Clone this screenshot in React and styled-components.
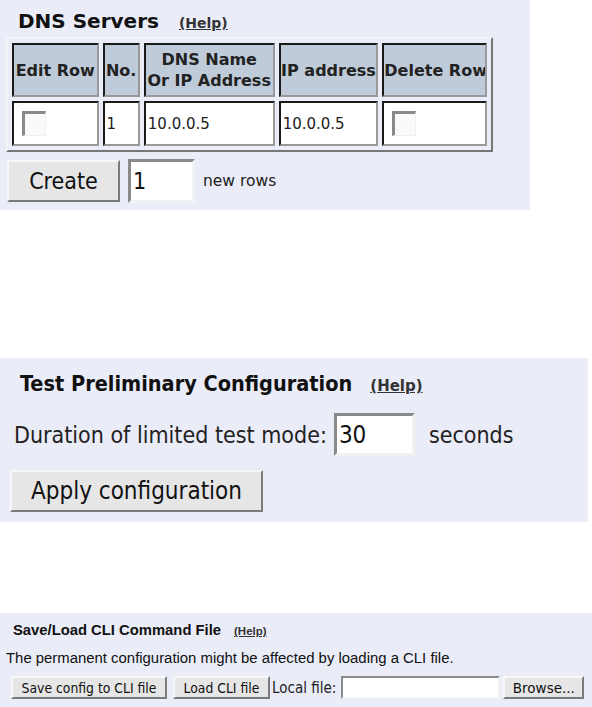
import React from 'react';
import styled, { createGlobalStyle } from 'styled-components';

const GlobalStyle = createGlobalStyle`
  html, body {
    margin: 0;
    padding: 0;
    background: #fff;
  }
`;

const Page = styled.div`
  display: flex;
  flex-direction: column;
  width: 592px;
`;

const Panel = styled.section`
  box-sizing: border-box;
  background: #eaecf8;
  width: ${(p) => p.$w}px;
  height: ${(p) => p.$h}px;
  margin-top: ${(p) => p.$top || 0}px;
  font-family: ${(p) => p.$font};
  color: #111;
  display: flex;
  flex-direction: column;
`;

const TitleRow = styled.div`
  display: flex;
  align-items: baseline;
  padding-left: ${(p) => p.$left}px;
  height: ${(p) => p.$h}px;
  padding-top: ${(p) => p.$top}px;
  box-sizing: border-box;
`;

const Title = styled.h2`
  margin: 0;
  font-size: ${(p) => p.$size}px;
  font-weight: bold;
  line-height: 1;
  color: #111;
`;

const Help = styled.a`
  margin-left: ${(p) => p.$gap}px;
  font-size: ${(p) => p.$size}px;
  font-weight: bold;
  color: #333;
  text-decoration: underline;
  cursor: pointer;
`;

const Grid = styled.table`
  margin-left: 6px;
  border: 2px solid;
  border-color: #f4f4f8 #777 #777 #f4f4f8;
  border-spacing: 4px 4px;
  table-layout: fixed;
  width: 487px;
  font-family: 'DejaVu Sans', sans-serif;
`;

const Head = styled.th`
  box-sizing: border-box;
  width: ${(p) => p.$w}px;
  height: 54px;
  padding: 0;
  background: #bfcbd9;
  border: 2px solid;
  border-color: #1a1a1a #999 #999 #1a1a1a;
  font-size: 16px;
  font-weight: bold;
  line-height: 21px;
  color: #222;
  text-align: center;
  white-space: nowrap;
  overflow: hidden;
`;

const Cell = styled.td`
  box-sizing: border-box;
  height: 45px;
  padding: 0 ${(p) => (p.$box ? 8 : 2)}px;
  background: #fff;
  border: 2px solid;
  border-color: #1a1a1a #999 #999 #1a1a1a;
  font-size: 15px;
  color: #222;
  vertical-align: middle;
`;

const Check = styled.span`
  display: block;
  box-sizing: border-box;
  width: 24px;
  height: 25px;
  background: #fafafa;
  border-top: 3px solid #8a8a8a;
  border-left: 3px solid #8a8a8a;
  border-right: 1px solid #f0f0f0;
  border-bottom: 1px solid #f0f0f0;
`;

const Row = styled.div`
  display: flex;
  align-items: center;
  padding-left: ${(p) => p.$left}px;
  margin-top: ${(p) => p.$top || 0}px;
  gap: ${(p) => p.$gap || 0}px;
`;

const Button = styled.button`
  box-sizing: border-box;
  height: ${(p) => p.$h}px;
  width: ${(p) => p.$w}px;
  padding: 0;
  background: #e6e6e6;
  border: ${(p) => p.$b}px solid;
  border-color: #f7f7f7 #7a7a7a #7a7a7a #f7f7f7;
  font-family: ${(p) => p.$font};
  font-size: ${(p) => p.$size}px;
  color: #111;
  text-align: center;
  white-space: nowrap;
`;

const Field = styled.input`
  box-sizing: border-box;
  height: ${(p) => p.$h}px;
  width: ${(p) => p.$w}px;
  padding: 0 0 0 2px;
  background: #fff;
  border: ${(p) => p.$b}px solid;
  border-color: #8a8a8a #f2f2f2 #f2f2f2 #8a8a8a;
  font-family: ${(p) => p.$font};
  font-size: ${(p) => p.$size}px;
  color: #111;
  outline: none;
`;

const Label = styled.span`
  font-size: ${(p) => p.$size}px;
  margin-left: ${(p) => p.$gap || 0}px;
  color: #222;
  white-space: nowrap;
`;

const Note = styled.p`
  margin: 0;
  padding-left: 6px;
  font-size: 14.9px;
  line-height: 17px;
  margin-top: 11px;
  color: #111;
  white-space: nowrap;
`;

const columns = [
  { label: 'Edit Row', w: 86 },
  { label: 'No.', w: 37 },
  { label: ['DNS Name', 'Or IP Address'], w: 130 },
  { label: 'IP address', w: 99 },
  { label: 'Delete Row', w: 104 },
];

const servers = [{ no: 1, name: '10.0.0.5', ip: '10.0.0.5' }];

const condensed = "'DejaVu Sans Condensed', 'DejaVu Sans', sans-serif";

export default function App() {
  return (
    <Page>
      <GlobalStyle />

      <Panel $w={530} $h={210} $font="'DejaVu Sans', sans-serif">
        <TitleRow $left={18} $top={11} $h={37}>
          <Title $size={20}>DNS Servers</Title>
          <Help $size={14} $gap={20}>(Help)</Help>
        </TitleRow>
        <Grid>
          <thead>
            <tr>
              {columns.map(({ label, w }, i) => (
                <Head key={i} $w={w}>
                  {Array.isArray(label) ? (
                    <>
                      {label[0]}
                      <br />
                      {label[1]}
                    </>
                  ) : (
                    label
                  )}
                </Head>
              ))}
            </tr>
          </thead>
          <tbody>
            {servers.map(({ no, name, ip }) => (
              <tr key={no}>
                <Cell $box>
                  <Check />
                </Cell>
                <Cell>{no}</Cell>
                <Cell>{name}</Cell>
                <Cell>{ip}</Cell>
                <Cell $box>
                  <Check />
                </Cell>
              </tr>
            ))}
          </tbody>
        </Grid>
        <Row $left={7} $top={7}>
          <Button $w={113} $h={42} $b={2} $size={23} $font={condensed}>
            Create
          </Button>
          <Field $w={67} $h={44} $b={3} $size={23} $font={condensed} defaultValue="1" style={{ marginLeft: 8 }} />
          <Label $size={15.5} $gap={8}>new rows</Label>
        </Row>
      </Panel>

      <Panel $w={588} $h={164} $top={148} $font={condensed}>
        <TitleRow $left={20} $top={15} $h={55}>
          <Title $size={21.5}>Test Preliminary Configuration</Title>
          <Help $size={15} $gap={18} style={{ fontFamily: "'DejaVu Sans', sans-serif" }}>(Help)</Help>
        </TitleRow>
        <Row $left={14}>
          <Label $size={23}>Duration of limited test mode:</Label>
          <Field $w={81} $h={43} $b={3} $size={24} $font={condensed} defaultValue="30" style={{ marginLeft: 7 }} />
          <Label $size={23} $gap={14}>seconds</Label>
        </Row>
        <Row $left={10} $top={14}>
          <Button $w={253} $h={42} $b={2} $size={24} $font={condensed}>
            Apply configuration
          </Button>
        </Row>
      </Panel>

      <Panel $w={592} $h={94} $top={91} $font="'Liberation Sans', Arial, sans-serif">
        <TitleRow $left={13} $top={10} $h={26}>
          <Title $size={14.8}>Save/Load CLI Command File</Title>
          <Help $size={11.5} $gap={13}>(Help)</Help>
        </TitleRow>
        <Note>The permanent configuration might be affected by loading a CLI file.</Note>
        <Row $left={11} $top={9} $gap={6}>
          <Button $w={156} $h={23} $b={2} $size={13.8} $font={condensed}>
            Save config to CLI file
          </Button>
          <Button $w={97} $h={23} $b={2} $size={13.8} $font={condensed}>
            Load CLI file
          </Button>
          <Label $size={15} style={{ fontFamily: condensed, marginLeft: -4 }}>Local file:</Label>
          <Field $w={159} $h={23} $b={2} $size={12} $font={condensed} style={{ marginLeft: -1 }} />
          <Button $w={81} $h={23} $b={2} $size={13.5} $font="'DejaVu Sans', sans-serif" style={{ marginLeft: -3 }}>
            Browse...
          </Button>
        </Row>
      </Panel>
    </Page>
  );
}
